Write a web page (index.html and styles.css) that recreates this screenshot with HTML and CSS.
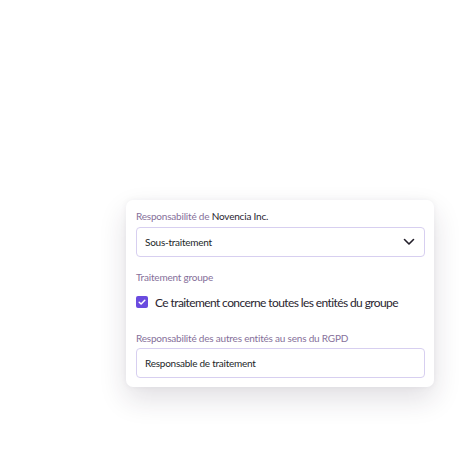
FILE: index.html
```html
<!DOCTYPE html>
<html lang="fr">
<head>
<meta charset="utf-8">
<link rel="stylesheet" href="styles.css">
</head>
<body>
<div class="card">
  <div class="label label-first">Responsabilité de <span class="strong">Novencia Inc.</span></div>
  <div class="field select">
    <span>Sous-traitement</span>
    <svg class="chevron" width="12" height="8" viewBox="0 0 12 8"><path d="M1.5 1.5 L6 6 L10.5 1.5" fill="none" stroke="#231f2a" stroke-width="1.6" stroke-linecap="round" stroke-linejoin="round"/></svg>
  </div>
  <div class="label label-group">Traitement groupe</div>
  <div class="check-row">
    <span class="checkbox"><svg width="12" height="12" viewBox="0 0 12 12"><path d="M3.2 6.2 L5.1 8 L8.8 4.2" fill="none" stroke="#fff" stroke-width="1.5" stroke-linecap="round" stroke-linejoin="round"/></svg></span>
    <span class="check-text">Ce traitement concerne toutes les entités du groupe</span>
  </div>
  <div class="label label-third">Responsabilité des autres entités au sens du RGPD</div>
  <div class="field input">Responsable de traitement</div>
</div>
</body>
</html>
```

FILE: styles.css
```css
* { box-sizing: border-box; }
html, body { margin: 0; padding: 0; background: #ffffff; }
body {
  font-family: Lato, "Noto Sans", sans-serif;
  width: 474px;
  height: 454px;
  overflow: hidden;
}
.card {
  margin: 200px 0 0 126px;
  width: 308px;
  padding: 9px 9px 9px 10px;
  background: #fff;
  border-radius: 7px;
  box-shadow: 0 12px 28px rgba(40, 30, 60, 0.14), 0 0 6px rgba(40, 30, 60, 0.05);
  display: flex;
  flex-direction: column;
}
.label {
  font-size: 10px;
  line-height: 14px;
  color: #86709a;
  letter-spacing: -0.2px;
  white-space: nowrap;
}
.strong { color: #2a2530; }
.label-first { margin-bottom: 4px; }
.label-group { margin-top: 13px; }
.label-third { margin-top: 21px; margin-bottom: 3px; }
.field {
  height: 30px;
  border: 1px solid #d7cff0;
  border-radius: 4px;
  display: flex;
  align-items: center;
  padding: 0 9px 0 8px;
  font-size: 10px;
  letter-spacing: -0.25px;
  color: #231f2a;
  white-space: nowrap;
}
.select { justify-content: space-between; }
.check-row {
  margin-top: 10px;
  height: 16px;
  display: flex;
  align-items: center;
  gap: 7px;
}
.checkbox {
  width: 12px;
  height: 12px;
  border-radius: 2px;
  background: #6a4bdf;
  display: flex;
}
.check-text {
  font-size: 12px;
  letter-spacing: -0.6px;
  color: #2a2530;
  white-space: nowrap;
}
```
